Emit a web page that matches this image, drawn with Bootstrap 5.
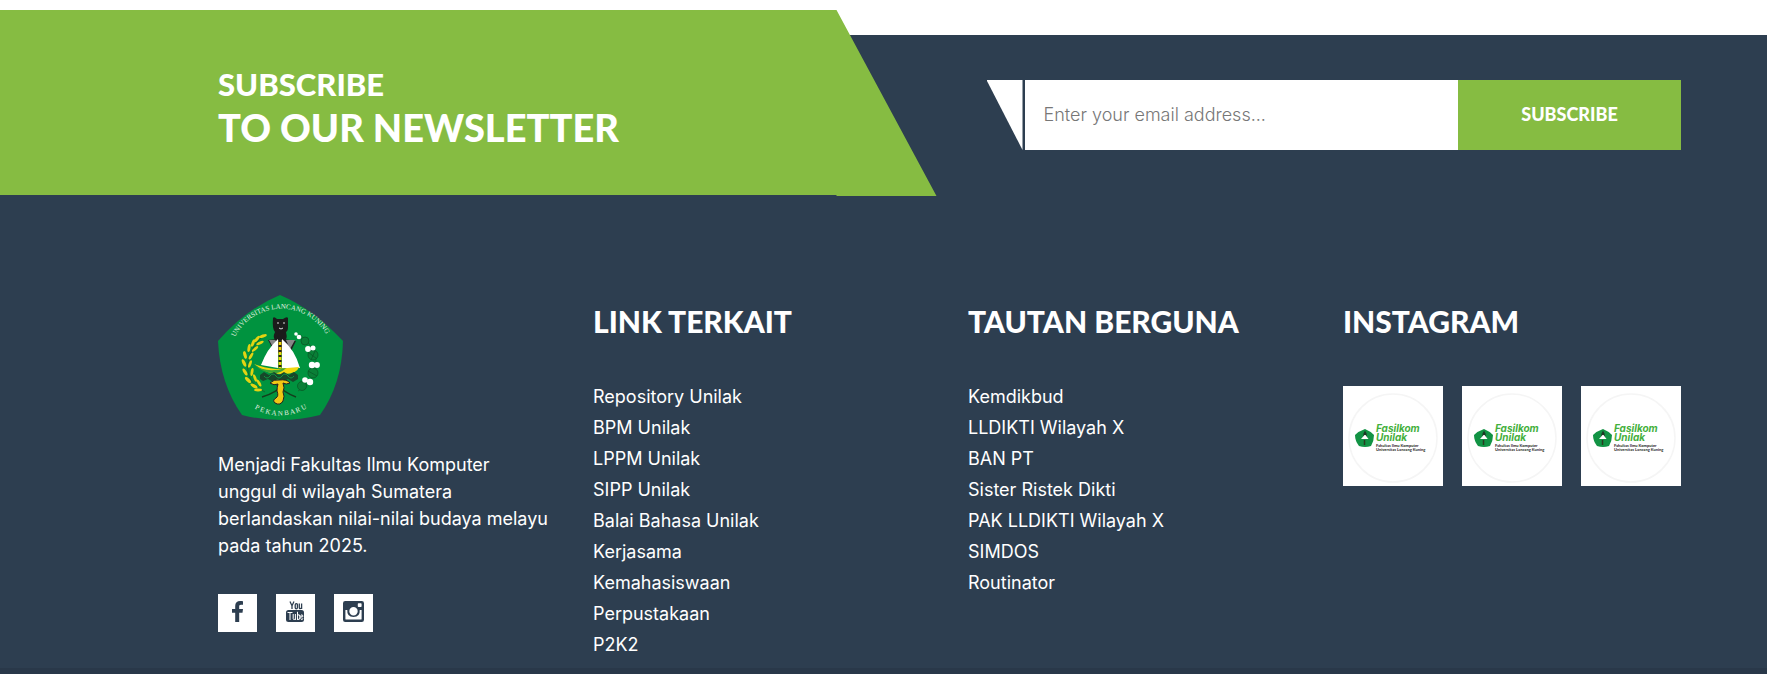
<!DOCTYPE html>
<html lang="id">
<head>
<meta charset="utf-8">
<meta name="viewport" content="width=device-width, initial-scale=1">
<title>Fasilkom Unilak</title>
<link href="https://cdn.jsdelivr.net/npm/bootstrap@5.3.0/dist/css/bootstrap.min.css" rel="stylesheet">
<style>
  :root { --navy: #2d3e50; --leaf: #86bc42; }
  body { font-family: Inter, "Open Sans", sans-serif; font-size: 18px; color: #fff; background: #fff; }
  .wrap { padding-left: 218px; padding-right: 86px; }
  .site-footer { background: var(--navy); margin-top: 35px; }
  .news-title { width: 53%; height: 186px; padding: 54px 0 0 218px; margin-top: -25px; background: var(--leaf);
    clip-path: polygon(0 0, calc(100% - 100px) 0, 100% 100%, calc(100% - 100px) 100%, calc(100% - 100px) calc(100% - 1px), 0 calc(100% - 1px)); }
  .news-title h2 { font-family: Lato, sans-serif; font-weight: 900; font-size: 38px; line-height: 46px; margin: 0; }
  .news-title h2 span { display: block; font-size: 31px; line-height: 40px; }
  .news-form { height: 70px; margin: 45px 86px 0 50px; }
  .slant { width: 36px; margin-right: 2px; background: #fff; clip-path: polygon(0 0, 100% 0, 100% 100%); }
  .news-form .form-control { border: 0; border-radius: 0; padding: 0 19px 2px; font-size: 18px; font-weight: 300; color: #6f6f6f; }
  .news-form .form-control::placeholder { color: #777; }
  .news-form .btn { width: 223px; border-radius: 0; border: 0; padding: 0 0 2px; background: var(--leaf); color: #fff; font-family: Lato, sans-serif; font-weight: 900; font-size: 18px; }
  .foot-main { padding-top: 99px; padding-bottom: 8px; }
  .foot-main .row { --bs-gutter-x: 37px; }
  .crest { width: 126px; height: 126px; display: block; margin-bottom: 30px; }
  .about { line-height: 27px; margin-bottom: 35px; }
  .foot-main h3 { font-family: Lato, sans-serif; font-weight: 900; font-size: 30px; line-height: 36px; margin: 8px 0 42px; }
  .foot-links { line-height: 31px; margin: 0; }
  .foot-links a { color: #fff; text-decoration: none; }
  .social { gap: 19px; }
  .social a { width: 39px; height: 38px; background: #fff; color: var(--navy); }
  .insta { gap: 19px; margin-top: 47px; }
  .insta a { width: 100px; height: 100px; background: #fff; }
  .foot-end { height: 20px; background: #293849; }
</style>
</head>
<body class="overflow-hidden">
<footer class="site-footer">
  <section class="d-flex align-items-start">
    <div class="news-title">
      <h2><span>SUBSCRIBE</span>TO OUR NEWSLETTER</h2>
    </div>
    <form class="news-form d-flex flex-grow-1">
      <span class="slant"></span>
      <input type="email" class="form-control shadow-none flex-grow-1 w-auto" placeholder="Enter your email address..." aria-label="Email address">
      <button type="button" class="btn flex-shrink-0">SUBSCRIBE</button>
    </form>
  </section>

  <section class="foot-main wrap">
    <div class="row">
      <div class="col-3">
        <svg class="crest" viewBox="0 0 126 126" role="img" aria-label="Universitas Lancang Kuning">
          <defs>
            <path id="arcTop" d="M17 42A52 52 0 0 1 111 45"/>
            <path id="arcBottom" d="M34 112Q63 130 94 110"/>
          </defs>
          <path d="M62 0Q95 14 125 46Q124 89 102 120Q63 130 24 120Q2 89 0 46Q28 14 62 0Z" fill="#00933f"/>
          <g fill="#e6f2e4" font-family="Liberation Serif, serif">
            <text font-size="7"><textPath href="#arcTop" startOffset="0">UNIVERSITAS LANCANG KUNING</textPath></text>
            <text font-size="7"><textPath href="#arcBottom" startOffset="3">P E K A N B A R U</textPath></text>
          </g>
          <g fill="none" stroke="#12682f" stroke-width="1">
            <path d="M47 39C28 55 20 84 47 97"/><path d="M81 39C102 54 106 82 80 96"/>
            <path d="M44 102Q58 98 66 89M78 102Q67 98 58 89" stroke="#143d1d" stroke-width="1.4"/>
          </g>
          <g fill="#e3d412">
            <ellipse cx="45" cy="41" rx="4" ry="1.5" transform="rotate(-20 45 41)"/><ellipse cx="39" cy="44" rx="4" ry="1.5" transform="rotate(-50 39 44)"/>
            <ellipse cx="35" cy="48" rx="4" ry="1.5" transform="rotate(-70 35 48)"/><ellipse cx="42" cy="48" rx="4" ry="1.4" transform="rotate(-25 42 48)"/>
            <ellipse cx="31" cy="53" rx="4" ry="1.5" transform="rotate(-80 31 53)"/><ellipse cx="37" cy="54" rx="4" ry="1.4" transform="rotate(-40 37 54)"/>
            <ellipse cx="27" cy="60" rx="4" ry="1.6" transform="rotate(75 27 60)"/><ellipse cx="33" cy="61" rx="4" ry="1.4" transform="rotate(-60 33 61)"/>
            <ellipse cx="26" cy="68" rx="4" ry="1.6" transform="rotate(65 26 68)"/><ellipse cx="32" cy="69" rx="4" ry="1.4" transform="rotate(-70 32 69)"/>
            <ellipse cx="27" cy="77" rx="4" ry="1.6" transform="rotate(60 27 77)"/><ellipse cx="34" cy="77" rx="4" ry="1.4" transform="rotate(-80 34 77)"/>
            <ellipse cx="30" cy="85" rx="4" ry="1.6" transform="rotate(45 30 85)"/><ellipse cx="37" cy="83" rx="4" ry="1.4" transform="rotate(70 37 83)"/>
            <ellipse cx="36" cy="91" rx="4" ry="1.6" transform="rotate(30 36 91)"/><ellipse cx="41" cy="88" rx="4" ry="1.4" transform="rotate(60 41 88)"/>
            <ellipse cx="40" cy="95" rx="4" ry="1.4"/>
          </g>
          <g fill="#0a7f37" stroke="#075a27" stroke-width=".8">
            <circle cx="87" cy="46" r="4"/><circle cx="95" cy="60" r="5"/><path d="M90 57l9 7M97 56l-4 9"/>
            <circle cx="95" cy="78" r="5"/><path d="M90 76l9 5"/><circle cx="84" cy="91" r="4.5"/>
          </g>
          <g fill="#fff">
            <circle cx="78" cy="39" r="1.8"/><circle cx="81" cy="42" r="2.3"/><circle cx="90" cy="54" r="2.9"/><circle cx="95" cy="53" r="2.5"/>
            <circle cx="94" cy="70" r="3.2"/><circle cx="99" cy="70" r="2.9"/><circle cx="87" cy="85" r="2.8"/><circle cx="92" cy="87" r="3.2"/>
          </g>
          <path d="M50 45l9-1 7 0 12 2-6 12H57Z" fill="#202020"/>
          <path d="M51 45h9l-4 9zM68 45h9l-5 9z" fill="#888"/>
          <path d="M55 23q1-2 4 1h6q4-3 5-1v9q0 4-2 5 2 8-2 9h-8q-4-3-1-9-3-3-2-14z" fill="#1b1b1b"/>
          <path d="M59 28h2M65 28h2M61 33l2 1 2-1" stroke="#ddd" stroke-width="1" fill="none"/>
          <path d="M60 44Q49 54 43 70L60 73ZM64 44Q77 55 82 73H64Z" fill="#fff"/>
          <path d="M62 45v28" stroke="#f0d70f" stroke-width="3"/><path d="M62 45v28" stroke="#222" stroke-width="3" stroke-dasharray="2 3"/>
          <path d="M36 69Q46 73 58 74L81 72Q79 79 66 79Q49 80 36 69Z" fill="#f0d70f"/>
          <path d="M36 69Q47 79 68 73Q63 79 54 78Q43 77 36 69Z" fill="#3da436"/>
          <path d="M42 80l4-3 5 3 5-3 5 3 5-3 5 3 5-3 4 3v4l-5 3-5-3-5 3-5-3-5 3-5-3-5 2-3-2z" fill="#17472a"/>
          <path d="M46 81q3 4 6 0t6 0 6 0 6 0 6 0" stroke="#119444" stroke-width="1" fill="none"/>
          <path d="M52 88q4-4 9-3 8-1 11 3-4 2-7 0 2 5 0 9 2 4 0 9-3 5-8 2-3-3 1-5 3-2 1-7 0-4 1-7-4 2-8-1z" fill="#f0c814" stroke="#222" stroke-width="1"/>
        </svg>
        <p class="about">Menjadi Fakultas Ilmu Komputer<br>unggul di wilayah Sumatera<br>berlandaskan nilai-nilai budaya melayu<br>pada tahun 2025.</p>
        <div class="social d-flex">
          <a href="#" class="d-flex align-items-center justify-content-center" aria-label="Facebook">
            <svg width="38" height="38" viewBox="1 0 38 38" fill="currentColor"><path d="M25 7.300v3.400h-2c-1.500 0-1.800.7-1.800 1.800V15H25l-.5 3.700h-3.300V28h-4v-9.300H14V15h3.200v-2.900c0-3.200 2-5 4.900-5 1.400 0 2.500.1 2.900.2z"/></svg>
          </a>
          <a href="#" class="d-flex align-items-center justify-content-center" aria-label="YouTube">
            <svg width="38" height="38" viewBox="1 0 38 38"><rect x="10" y="16" width="18" height="12" rx="2.500" fill="currentColor"/><path d="M14 7.500l2 4.300V15M18 7.500l-2 4.300M19.200 11q0-1.300 1.100-1.300T21.400 11v2.500q0 1.300-1.100 1.300t-1.100-1.300zM23.300 9.600v4q0 1.200 1 1t1.300-1M25.600 9.600V15" fill="none" stroke="currentColor" stroke-width="1.300"/><path d="M11.500 18.500h5M14 18.500V26M17.200 20v4.600q0 1 .9.900t1.300-.9M19.400 20v6M21.500 17.800V26M21.500 21.200q2.300-1.300 2.300.8v2q0 2.300-2.300 1.200M26.800 24.300q0 1.300-1 1.300t-1-1.300v-2.200q0-1.300 1-1.300t1 1.300v.7h-2" fill="none" stroke="#fff" stroke-width="1"/></svg>
          </a>
          <a href="#" class="d-flex align-items-center justify-content-center" aria-label="Instagram">
            <svg width="38" height="38" viewBox="1 0 38 38"><path fill="currentColor" fill-rule="evenodd" d="M11.200 7h16.600Q30 7 30 9.200v16.600Q30 28 27.800 28H11.200Q9 28 9 25.800V9.200Q9 7 11.200 7zM11.400 16v8.900q0 .7.7.7h14.800q.7 0 .7-.7V16h-1.900q.6 6.900-6.200 6.900T13.300 16zM24.500 9.300q-.7 0-.7.700v2.300q0 .7.7.7h2.400q.7 0 .7-.7V10q0-.7-.7-.7zM19.500 13a4.200 4.200 0 1 0 0 8.400 4.200 4.200 0 0 0 0-8.400z"/></svg>
          </a>
        </div>
      </div>
      <div class="col-3">
        <h3>LINK TERKAIT</h3>
        <ul class="foot-links list-unstyled">
          <li><a href="#">Repository Unilak</a></li>
          <li><a href="#">BPM Unilak</a></li>
          <li><a href="#">LPPM Unilak</a></li>
          <li><a href="#">SIPP Unilak</a></li>
          <li><a href="#">Balai Bahasa Unilak</a></li>
          <li><a href="#">Kerjasama</a></li>
          <li><a href="#">Kemahasiswaan</a></li>
          <li><a href="#">Perpustakaan</a></li>
          <li><a href="#">P2K2</a></li>
        </ul>
      </div>
      <div class="col-3">
        <h3>TAUTAN BERGUNA</h3>
        <ul class="foot-links list-unstyled">
          <li><a href="#">Kemdikbud</a></li>
          <li><a href="#">LLDIKTI Wilayah X</a></li>
          <li><a href="#">BAN PT</a></li>
          <li><a href="#">Sister Ristek Dikti</a></li>
          <li><a href="#">PAK LLDIKTI Wilayah X</a></li>
          <li><a href="#">SIMDOS</a></li>
          <li><a href="#">Routinator</a></li>
        </ul>
      </div>
      <div class="col-3">
        <h3>INSTAGRAM</h3>
        <div class="insta d-flex">
          <a href="#" aria-label="Instagram post 1"><svg class="d-block" width="100" height="100">
            <g id="fasilkom">
              <circle cx="50" cy="52" r="44" fill="none" stroke="#f5f5f5" stroke-width="1.500"/>
              <path d="M22 43q5 2 9 6 0 6-3 11-6 2-12 0-4-5-4-11 4-4 10-6z" fill="#129344"/>
              <path d="M22 44.500l1.500 3 .5 5h-4l.5-5z" fill="#1d3524"/><path d="M21.500 49l-3.500 4h7.500l-3-4z" fill="#fff"/><path d="M21.500 54v5" stroke="#2b3a20" stroke-width="1.500"/>
              <g font-family="Inter, sans-serif" font-weight="700" font-style="italic" font-size="10" fill="#44b03c">
                <text x="33" y="46">Fasilkom</text><text x="33" y="55">Unilak</text>
              </g>
              <g font-family="Lato, sans-serif" font-weight="900" font-size="4" fill="#333">
                <text x="33" y="61">Fakultas Ilmu Komputer</text><text x="33" y="65">Universitas Lancang Kuning</text>
              </g>
            </g></svg></a>
          <a href="#" aria-label="Instagram post 2"><svg class="d-block" width="100" height="100"><use href="#fasilkom"/></svg></a>
          <a href="#" aria-label="Instagram post 3"><svg class="d-block" width="100" height="100"><use href="#fasilkom"/></svg></a>
        </div>
      </div>
    </div>
  </section>
  <div class="foot-end"></div>
</footer>
<script src="https://cdn.jsdelivr.net/npm/bootstrap@5.3.0/dist/js/bootstrap.bundle.min.js"></script>
</body>
</html>
